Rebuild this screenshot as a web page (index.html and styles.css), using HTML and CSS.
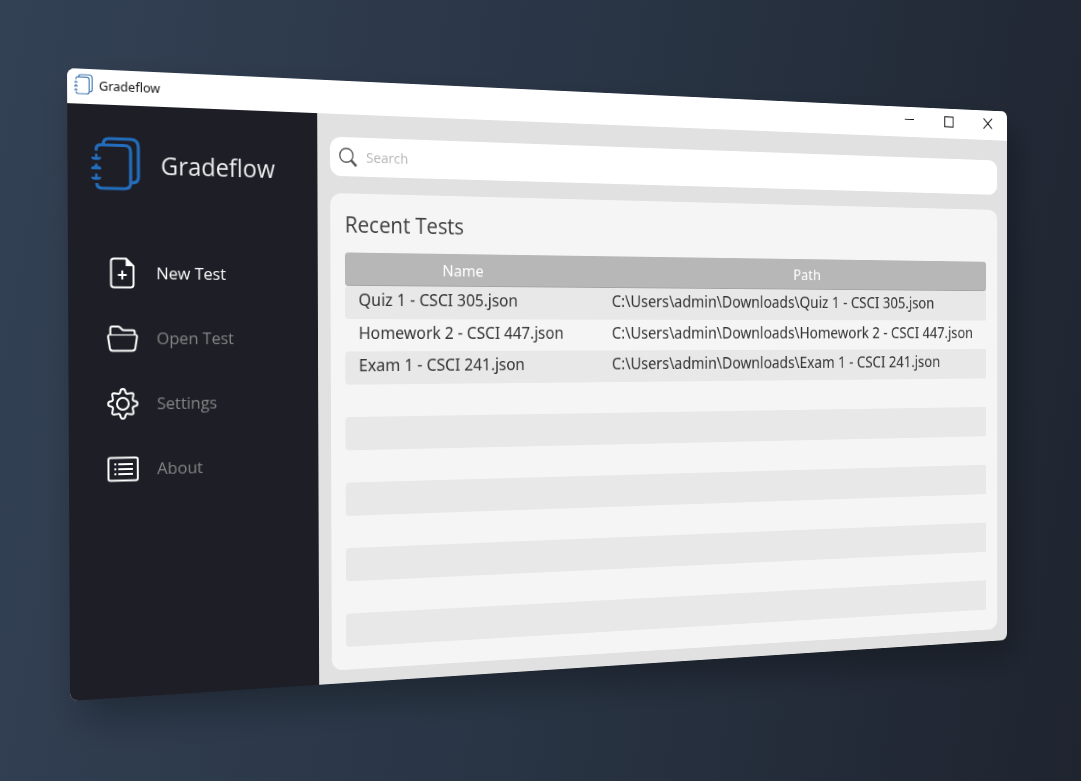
FILE: index.html
```html
<!DOCTYPE html>
<html lang="en">
<head>
<meta charset="utf-8">
<title>Gradeflow</title>
<link rel="stylesheet" href="styles.css">
</head>
<body>
<svg class="sprite" aria-hidden="true">
  <symbol id="notebook" viewBox="0 0 50 54">
    <g fill="none" stroke="currentColor" stroke-width="3.200" stroke-linecap="butt" stroke-linejoin="round">
      <path d="M5 14.500V12.500Q5 8.500 10 8.500H34Q40 8.500 40 14.500V46Q40 52 34 52H11Q5.500 52 5.500 47"/>
      <path d="M12 8.500Q12 2 18 2H40Q48 2 48 10V40Q48 46 41 46"/>
    </g>
    <path fill="currentColor" d="M3.800 17.500H6.300V20.800H10V22.300L7.500 23.800H2.500L0 22.300V20.800H3.800zM3.800 27.500H6.300V29.200L10 31V33.300H0V31L3.800 29.200zM3.800 37.500H6.300V40.800H10V42.300L7.500 43.800H2.500L0 42.300V40.800H3.800z"/>
  </symbol>
</svg>
<div class="stage">
  <div class="window">
    <header class="titlebar">
      <svg class="titlebar-icon" aria-hidden="true"><use href="#notebook"/></svg>
      <span class="titlebar-name">Gradeflow</span>
      <button class="window-button" aria-label="Minimize"><svg viewBox="0 0 13 13"><path d="M0 5.500H13"/></svg></button>
      <button class="window-button" aria-label="Maximize"><svg viewBox="0 0 13 13"><path d="M.7.7H12.300V12.300H.7z"/></svg></button>
      <button class="window-button" aria-label="Close"><svg viewBox="0 0 13 13"><path d="M.5.5L12.500 12.500M12.500.5L.5 12.500"/></svg></button>
    </header>
    <div class="content">
      <aside class="sidebar">
        <div class="brand">
          <svg class="brand-logo" aria-hidden="true"><use href="#notebook"/></svg>
          <h1 class="brand-name">Gradeflow</h1>
        </div>
        <nav class="nav">
          <button class="nav-item nav-item-active">
            <svg class="nav-icon" viewBox="0 0 32 32" aria-hidden="true"><path d="M20 1.500H7.500Q4.500 1.500 4.500 4.500V27.500Q4.500 30.500 7.500 30.500H24.500Q27.500 30.500 27.500 27.500V9zM11.500 18H20.500M16 13.500V22.500"/><path class="filled" d="M19.500 1.500V9H27.500z"/></svg>
            <span class="nav-label">New Test</span>
          </button>
          <button class="nav-item">
            <svg class="nav-icon" viewBox="0 0 32 32" aria-hidden="true"><path d="M3.500 12V6Q3.500 4 5.500 4H11Q12.500 4 13.500 5L15 6.500Q16 7.700 17.500 7.700H26.500Q28.500 7.700 28.500 9.700V12M2.500 12.500Q1 13 1.200 14.500L3 26Q3.500 28.500 6 28.500H26Q28.500 28.500 29 26L30.800 14.500Q31 13 29.500 12.500"/><path class="fine" d="M2.500 12.500H29.500"/></svg>
            <span class="nav-label">Open Test</span>
          </button>
          <button class="nav-item">
            <svg class="nav-icon" viewBox="0 0 32 32" aria-hidden="true"><circle cx="16" cy="16" r="6"/><path d="M13.300 4.500Q13.500 1 16 1T18.700 4.500Q19.500 6.300 21.500 5.800L25 5.200Q27.300 5.200 26.800 7.500L26.200 10.500Q25.700 12.500 27.500 13.300Q31 13.500 31 16T27.500 18.700Q25.700 19.500 26.200 21.500L26.800 24.500Q27.300 26.800 25 26.800L21.500 26.200Q19.500 25.700 18.700 27.500Q18.500 31 16 31T13.300 27.500Q12.500 25.700 10.500 26.200L7 26.800Q4.700 26.800 5.200 24.500L5.800 21.500Q6.300 19.500 4.500 18.700Q1 18.500 1 16T4.500 13.300Q6.300 12.500 5.800 10.500L5.200 7.500Q4.700 5.200 7 5.200L10.500 5.800Q12.500 6.300 13.300 4.500z"/></svg>
            <span class="nav-label">Settings</span>
          </button>
          <button class="nav-item">
            <svg class="nav-icon" viewBox="0 0 32 32" aria-hidden="true"><rect x="1" y="4.500" width="30" height="23" rx="2"/><path d="M11 11H26M11 16H26M11 21H26M7 11H9M7 16H9M7 21H9"/></svg>
            <span class="nav-label">About</span>
          </button>
        </nav>
      </aside>
      <main class="main">
        <div class="search">
          <svg class="search-icon" viewBox="0 0 20 20" aria-hidden="true"><circle cx="8" cy="8" r="7.300"/><path d="M13.200 13.200L19 19.200"/></svg>
          <input class="search-input" type="text" placeholder="Search" aria-label="Search">
        </div>
        <section class="panel">
          <h2 class="panel-title">Recent Tests</h2>
          <table class="tests">
            <thead>
              <tr><th class="col-name" scope="col">Name</th><th class="col-path" scope="col">Path</th></tr>
            </thead>
            <tbody>
              <tr><td>Quiz 1 - CSCI 305.json</td><td>C:\Users\admin\Downloads\Quiz 1 - CSCI 305.json</td></tr>
              <tr><td>Homework 2 - CSCI 447.json</td><td>C:\Users\admin\Downloads\Homework 2 - CSCI 447.json</td></tr>
              <tr><td>Exam 1 - CSCI 241.json</td><td>C:\Users\admin\Downloads\Exam 1 - CSCI 241.json</td></tr>
              <tr><td></td><td></td></tr>
              <tr><td></td><td></td></tr>
              <tr><td></td><td></td></tr>
              <tr><td></td><td></td></tr>
              <tr><td></td><td></td></tr>
              <tr><td></td><td></td></tr>
              <tr><td></td><td></td></tr>
              <tr><td></td><td></td></tr>
            </tbody>
          </table>
        </section>
      </main>
    </div>
  </div>
</div>
</body>
</html>
```

FILE: styles.css
```css
* {
  box-sizing: border-box;
}

body {
  margin: 0;
  font-family: "Open Sans", "Noto Sans", sans-serif;
  overflow: hidden;
}

button {
  border: 0;
  background: none;
  font: inherit;
  cursor: pointer;
}

.sprite {
  position: absolute;
  width: 0;
  height: 0;
}

.stage {
  min-height: 100vh;
  padding: 68px 67px;
  overflow: hidden;
  background: linear-gradient(100deg, #334155 0%, #293545 50%, #1f242f 100%);
}

/* The window turns away from the viewer to the right. */
.window {
  display: flex;
  flex-direction: column;
  width: calc(100vw + 47px);
  min-height: 633px;
  border-radius: 8px;
  overflow: hidden;
  background: #e1e1e1;
  box-shadow: 12px 20px 40px rgba(0, 0, 0, 0.3);
  transform-origin: 0 0;
  transform: matrix3d(
    0.998416, 0.046203, 0, 0.00017562,
    0.004755, 1.003202, 0, 0.000005058,
    0, 0, 1, 0,
    0, 0, 0, 1
  );
}

.titlebar {
  display: flex;
  align-items: center;
  height: 35px;
  padding: 0 0 4px 7px;
  background: #fff;
}

.titlebar-icon {
  width: 19px;
  height: 21px;
  color: #4a7fb5;
}

.titlebar-name {
  flex: 1;
  padding-left: 6px;
  font-family: "Noto Sans", sans-serif;
  font-size: 13px;
  color: #111;
}

.window-button {
  display: flex;
  align-items: center;
  justify-content: center;
  width: 55px;
  height: 31px;
  padding: 0;
}

.window-button svg {
  width: 13px;
  height: 13px;
  fill: none;
  stroke: #111;
  stroke-width: 1.2;
}

.content {
  display: flex;
  flex: 1;
}

.sidebar {
  width: 262px;
  background: #1e1e27;
}

.brand {
  display: flex;
  align-items: center;
  gap: 21px;
  padding: 32px 0 0 24px;
}

.brand-logo {
  width: 50px;
  height: 54px;
  color: #236ebc;
}

.brand-name {
  margin: 0;
  font-size: 25px;
  line-height: 36px;
  font-weight: 400;
  color: #ececec;
}

.nav {
  display: flex;
  flex-direction: column;
  padding-top: 50px;
}

.nav-item {
  display: flex;
  align-items: center;
  gap: 19px;
  height: 66px;
  padding: 0 0 0 39px;
  font-size: 17px;
  color: #858585;
}

.nav-item-active {
  color: #fff;
}

.nav-label {
  padding-bottom: 2px;
}

.nav-icon {
  width: 32px;
  height: 32px;
  fill: none;
  stroke: #fff;
  stroke-width: 2;
}

.nav-icon .filled {
  fill: #fff;
  stroke: none;
}

.nav-icon .fine {
  stroke-width: 1.2;
}

.main {
  display: flex;
  flex: 1;
  flex-direction: column;
  gap: 18px;
  padding: 24px 14px 14px;
}

.search {
  display: flex;
  align-items: center;
  gap: 10px;
  height: 41px;
  padding: 0 10px;
  border-radius: 12px;
  background: #fff;
}

.search-icon {
  width: 20px;
  height: 20px;
  fill: none;
  stroke: #555;
  stroke-width: 1.4;
}

.search-icon path {
  stroke-width: 2.6;
}

.search-input {
  flex: 1;
  padding: 0 0 2px;
  border: 0;
  outline: 0;
  background: none;
  font: inherit;
  font-size: 15px;
}

.search-input::placeholder {
  color: #b4b4b4;
}

.panel {
  flex: 1;
  padding: 16px 16px 23px;
  border-radius: 12px;
  background: #f5f5f5;
}

.panel-title {
  margin: 0 0 14px;
  font-size: 23px;
  line-height: 32px;
  font-weight: 400;
  color: #3c3c3c;
}

.tests {
  width: 100%;
  height: 415px;
  border-spacing: 0;
  table-layout: fixed;
  font-family: "Noto Sans", sans-serif;
  font-size: 18px;
  line-height: 24px;
  color: #333;
}

.tests th {
  height: 35px;
  padding: 2px 28px 0 0;
  border-bottom: 1px solid #a4a4a4;
  background: #b7b7b7;
  font-size: 17px;
  font-weight: 400;
  color: #fff;
}

.tests .col-name {
  width: 296px;
  border-radius: 4px 0 0 4px;
}

.tests .col-path {
  padding: 2px 0 0 18px;
  border-radius: 0 4px 4px 0;
}

.tests td {
  height: 34px;
  padding: 0 0 6px 15px;
  white-space: nowrap;
}

.tests tbody tr:nth-child(odd) td {
  background: #e8e8e8;
}

.tests td:first-child {
  border-radius: 4px 0 0 4px;
}
```
